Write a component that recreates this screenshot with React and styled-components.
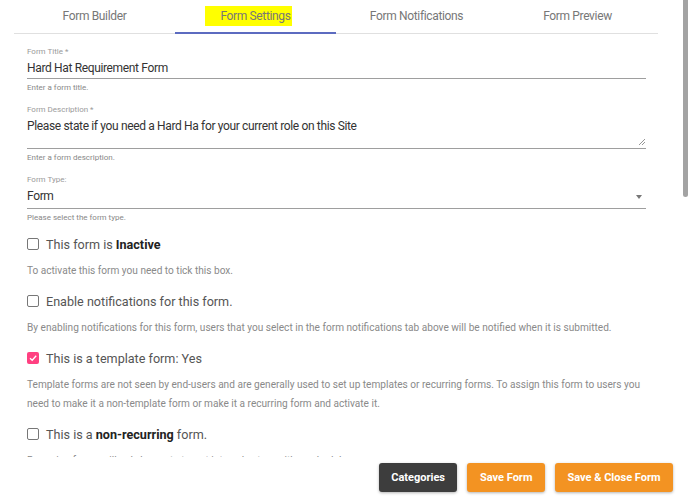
import React from 'react';
import styled, { createGlobalStyle } from 'styled-components';

const GlobalStyle = createGlobalStyle`
  html, body {
    margin: 0;
    padding: 0;
    background: #ffffff;
  }
  body {
    font-family: Roboto, "Liberation Sans", Arial, sans-serif;
  }
`;

const tabs = ['Form Builder', 'Form Settings', 'Form Notifications', 'Form Preview'];

const options = [
  {
    label: (
      <>
        This form is <b>Inactive</b>
      </>
    ),
    text: 'To activate this form you need to tick this box.',
  },
  {
    label: 'Enable notifications for this form.',
    text: 'By enabling notifications for this form, users that you select in the form notifications tab above will be notified when it is submitted.',
  },
  {
    label: 'This is a template form: Yes',
    checked: true,
    text: 'Template forms are not seen by end-users and are generally used to set up templates or recurring forms. To assign this form to users you need to make it a non-template form or make it a recurring form and activate it.',
  },
  {
    label: (
      <>
        This is a <b>non-recurring</b> form.
      </>
    ),
    text: 'Recurring forms will only be sent at a set interval set up with a schedule.',
  },
];

const App = () => {
  return (
    <Page>
      <GlobalStyle />
      <Main>
        <Content>
          <TabBar>
            {tabs.map((t) => (
              <Tab key={t} active={t === 'Form Settings'}>
                {t === 'Form Settings' ? <Marker>{t}</Marker> : t}
              </Tab>
            ))}
          </TabBar>

          <Form>
            <Field>
              <Label>Form Title *</Label>
              <Input>Hard Hat Requirement Form</Input>
              <Helper>Enter a form title.</Helper>
            </Field>

            <Field>
              <Label>Form Description *</Label>
              <TextArea>
                Please state if you need a Hard Ha for your current role on this Site
                <Resize width="7" height="7" viewBox="0 0 7 7">
                  <path d="M1 7 L7 1 M4 7 L7 4" stroke="#8a8a8a" strokeWidth="0.9" fill="none" />
                </Resize>
              </TextArea>
              <Helper>Enter a form description.</Helper>
            </Field>

            <Field>
              <Label>Form Type:</Label>
              <Select>
                Form
                <Caret />
              </Select>
              <Helper>Please select the form type.</Helper>
            </Field>

            {options.map((o, i) => (
              <Option key={i}>
                <CheckRow>
                  <Box checked={o.checked}>
                    {o.checked && (
                      <svg width="10" height="10" viewBox="0 0 10 10">
                        <path d="M2 5.2 L4.2 7.3 L8.2 2.8" stroke="#fff" strokeWidth="1.3" fill="none" />
                      </svg>
                    )}
                  </Box>
                  <span>{o.label}</span>
                </CheckRow>
                <Description>{o.text}</Description>
              </Option>
            ))}
          </Form>
        </Content>

        <Footer>
          <Button dark>Categories</Button>
          <Button>Save Form</Button>
          <Button>Save &amp; Close Form</Button>
        </Footer>
      </Main>

      <Track>
        <Thumb />
      </Track>
    </Page>
  );
};

const Page = styled.div`
  display: flex;
  width: 688px;
  height: 498px;
  overflow: hidden;
  background: #fff;
`;

const Main = styled.div`
  flex: 1;
  display: flex;
  flex-direction: column;
  min-width: 0;
`;

const Content = styled.div`
  flex: 1;
  overflow: hidden;
`;

const TabBar = styled.div`
  display: flex;
  width: 644px;
  margin-left: 14px;
  border-bottom: 1px solid #e0e0e0;
`;

const Tab = styled.div`
  flex: 1;
  height: 34px;
  display: flex;
  align-items: center;
  justify-content: center;
  padding-bottom: 1px;
  box-sizing: border-box;
  font-size: 12px;
  letter-spacing: -0.35px;
  color: #777;
  border-bottom: 2px solid ${(p) => (p.active ? '#5c6bc0' : 'transparent')};
  margin-bottom: -1px;
`;

const Marker = styled.span`
  background: #ffff00;
  padding: 3px 1px 3px 15px;
  margin-left: -14px;
`;

const Form = styled.div`
  padding: 12px 37px 0 27px;
`;

const Field = styled.div`
  margin-bottom: 10px;
`;

const Label = styled.div`
  font-size: 8px;
  line-height: 12px;
  color: #9a9a9a;
`;

const Input = styled.div`
  font-size: 12px;
  letter-spacing: -0.35px;
  line-height: 20px;
  color: #333;
  border-bottom: 1px solid #9e9e9e;
`;

const TextArea = styled(Input)`
  position: relative;
  height: 32px;
`;

const Resize = styled.svg`
  position: absolute;
  right: 1px;
  bottom: 3px;
`;

const Select = styled(Input)`
  position: relative;
  padding-bottom: 2px;
`;

const Caret = styled.span`
  position: absolute;
  right: 4px;
  top: 9px;
  width: 0;
  height: 0;
  border-left: 3.5px solid transparent;
  border-right: 3.5px solid transparent;
  border-top: 4px solid #777;
`;

const Helper = styled.div`
  margin-top: 3px;
  font-size: 8px;
  line-height: 12px;
  color: #888;
`;

const Option = styled.div`
  margin-top: 9px;
  margin-bottom: 11.5px;
`;

const CheckRow = styled.div`
  display: flex;
  align-items: center;
  gap: 7px;
  height: 20px;
  font-size: 12.6px;
  color: #555;

  b {
    color: #222;
    font-weight: 700;
  }
`;

const Box = styled.span`
  width: 12px;
  height: 12px;
  box-sizing: border-box;
  border-radius: 2px;
  border: ${(p) => (p.checked ? 'none' : '1.5px solid #777')};
  background: ${(p) => (p.checked ? '#ff4081' : '#fff')};
  display: flex;
  align-items: center;
  justify-content: center;
  flex-shrink: 0;
`;

const Description = styled.div`
  margin-top: 6.5px;
  font-size: 10.1px;
  line-height: 19px;
  color: #8a8a8a;
`;

const Footer = styled.div`
  height: 41px;
  flex-shrink: 0;
  box-sizing: border-box;
  padding: 6px 10px 6px 0;
  display: flex;
  justify-content: flex-end;
  align-items: flex-start;
  gap: 10px;
  background: #fff;
`;

const Button = styled.button`
  height: 29px;
  padding: 0 12.5px;
  border: none;
  border-radius: 3px;
  font-family: Roboto, "Liberation Sans", Arial, sans-serif;
  font-size: 11px;
  font-weight: 700;
  color: #fff;
  background: ${(p) => (p.dark ? '#3d3d3d' : '#f39322')};
  box-shadow: 0 1px 3px rgba(0, 0, 0, 0.3);
  cursor: pointer;
`;

const Track = styled.div`
  width: 5px;
  flex-shrink: 0;
`;

const Thumb = styled.div`
  height: 197px;
  background: #a3a3a3;
  border-radius: 0 0 3px 3px;
`;

export default App;
